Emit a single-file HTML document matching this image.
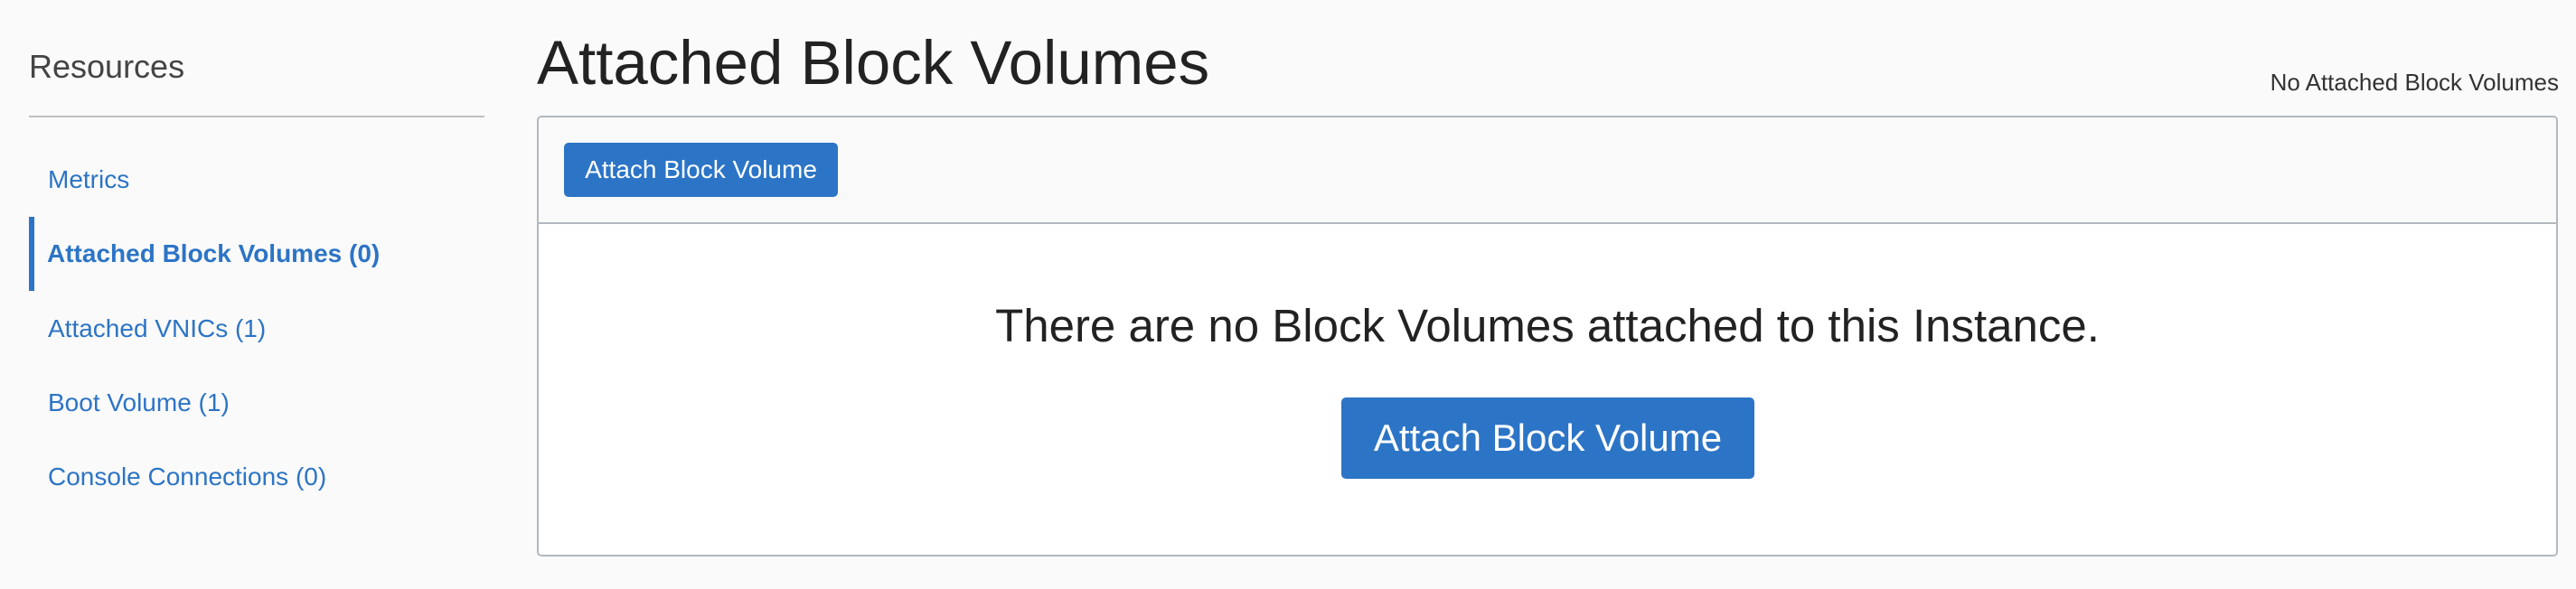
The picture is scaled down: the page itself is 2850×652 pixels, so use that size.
<!DOCTYPE html>
<html><head><style>
html,body{margin:0;padding:0;width:2850px;height:652px;background:#fafafa;overflow:hidden;font-family:"Liberation Sans",Arial,sans-serif;}
.a{position:absolute;line-height:1;white-space:nowrap;}
.nav{color:#2c74c6;font-size:28px;left:53px;}
.btn{position:absolute;background:#2c74c6;color:#fff;border-radius:5px;display:flex;align-items:center;justify-content:center;white-space:nowrap;}
</style></head><body>
<div class="a" style="left:32px;top:56px;font-size:36px;color:#444;">Resources</div>
<div style="position:absolute;left:32px;top:128px;width:504px;height:2px;background:#bcc1c7;"></div>
<div class="a nav" style="top:185px;">Metrics</div>
<div style="position:absolute;left:32px;top:240px;width:6px;height:82px;background:#2c74c6;"></div>
<div class="a nav" style="top:267px;font-weight:bold;left:52px;">Attached Block Volumes (0)</div>
<div class="a nav" style="top:350px;">Attached VNICs (1)</div>
<div class="a nav" style="top:432px;">Boot Volume (1)</div>
<div class="a nav" style="top:514px;">Console Connections (0)</div>

<div class="a" style="left:594px;top:35px;font-size:69px;color:#222;">Attached Block Volumes</div>
<div class="a" style="right:19px;top:78px;font-size:26px;color:#333;">No Attached Block Volumes</div>

<div style="position:absolute;left:594px;top:128px;width:2232px;height:484px;border:2px solid #b3b9c0;border-radius:5px;background:#fff;overflow:hidden;">
  <div style="position:absolute;left:0;top:0;right:0;height:116px;background:#f9f9f9;border-bottom:2px solid #b3b9c0;"></div>
</div>
<div class="btn" style="left:624px;top:158px;width:303px;height:60px;font-size:28px;">Attach Block Volume</div>
<div class="a" style="left:596px;width:2232px;text-align:center;top:335px;font-size:51px;color:#222;">There are no Block Volumes attached to this Instance.</div>
<div class="btn" style="left:1484px;top:440px;width:457px;height:90px;font-size:42px;">Attach Block Volume</div>
</body></html>
